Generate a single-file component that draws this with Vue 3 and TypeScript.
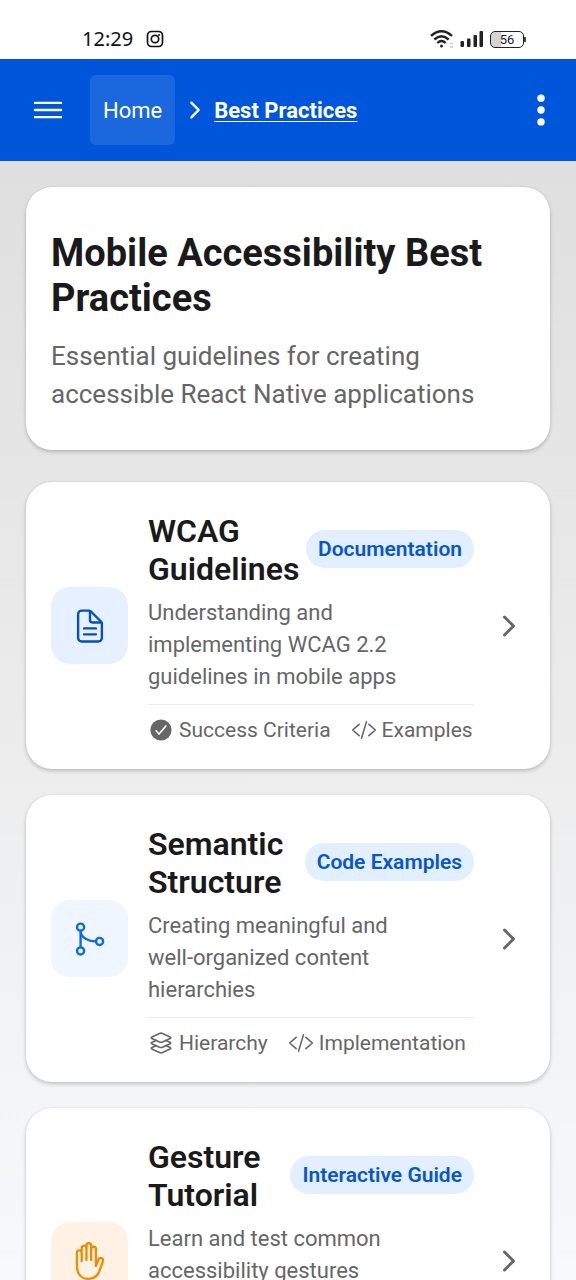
<script setup lang="ts">
interface Meta {
  icon: 'check' | 'layers' | 'code'
  label: string
}

interface Guide {
  title: string
  badge: string
  description: string
  tone: 'doc' | 'merge' | 'hand'
  meta: Meta[]
}

// The word joiner (U+2060) keeps a hyphenated word on one line.
const guides: Guide[] = [
  {
    title: 'WCAG Guidelines',
    badge: 'Documentation',
    description: 'Understanding and implementing WCAG 2.2 guidelines in mobile apps',
    tone: 'doc',
    meta: [
      { icon: 'check', label: 'Success Criteria' },
      { icon: 'code', label: 'Examples' },
    ],
  },
  {
    title: 'Semantic Structure',
    badge: 'Code Examples',
    description: 'Creating meaningful and well-\u2060organized content hierarchies',
    tone: 'merge',
    meta: [
      { icon: 'layers', label: 'Hierarchy' },
      { icon: 'code', label: 'Implementation' },
    ],
  },
  {
    title: 'Gesture Tutorial',
    badge: 'Interactive Guide',
    description: 'Learn and test common accessibility gestures',
    tone: 'hand',
    meta: [],
  },
]

const tilePaths: Record<Guide['tone'], string[]> = {
  doc: [
    'M416 221.25V416a48 48 0 0 1-48 48H144a48 48 0 0 1-48-48V96a48 48 0 0 1 48-48h98.75a32 32 0 0 1 22.62 9.37l141.26 141.26a32 32 0 0 1 9.37 22.62Z',
    'M256 56v120a32 32 0 0 0 32 32h120M176 288h160M176 368h160',
  ],
  merge: [
    'M177 96a48 48 0 1 1-96 0a48 48 0 1 1 96 0ZM177 416a48 48 0 1 1-96 0a48 48 0 1 1 96 0ZM433 288a48 48 0 1 1-96 0a48 48 0 1 1 96 0Z',
    'M129 144v224M129 144c0 96 112 144 208 144',
  ],
  hand: [
    'M80 320V144a32 32 0 0 1 32-32a32 32 0 0 1 32 32v112M144 256V80a32 32 0 0 1 32-32a32 32 0 0 1 32 32v160M272 241V96a32 32 0 0 1 32-32a32 32 0 0 1 32 32v224M208 240V48a32 32 0 0 1 32-32a32 32 0 0 1 32 32v192',
    'M80 320c0 117.4 64 176 152 176s123.71-39.6 144-88l52.71-144c6.66-18.05 3.64-34.79-11.87-43.6c-15.52-8.82-35.91-4.28-44.31 11.68L336 320',
  ],
}
</script>

<template>
  <div class="screen">
    <div class="status">
      <div class="status-side">
        <span class="time">12:29</span>
        <svg class="insta" viewBox="0 0 18 18" fill="none" stroke="#111" stroke-width="1.7">
          <rect x="1.5" y="1.5" width="15" height="15" rx="4" />
          <circle cx="9" cy="9" r="3.7" />
          <circle cx="13" cy="5" r="1" fill="#111" stroke="none" />
        </svg>
      </div>
      <div class="status-side levels">
        <svg class="wifi" viewBox="0 0 24 20" fill="none" stroke="#222" stroke-width="2.4">
          <path d="M1 6.8Q11.5-2.5 22 6.8" />
          <path d="M4.3 10.5Q11.5 4 18.7 10.5" />
          <path d="M7.3 14Q11.5 10 15.7 14" />
          <circle cx="11.5" cy="17" r="1.5" fill="#222" stroke="none" />
          <path d="M20 14.5h3M20 18h3" stroke="#ccc" stroke-width="1.6" />
        </svg>
        <svg class="bars" viewBox="0 0 24 18" fill="#222">
          <rect x="0.5" y="11" width="3.5" height="6" rx="1" />
          <rect x="7" y="8.5" width="3.5" height="8.5" rx="1" />
          <rect x="13.5" y="5" width="3.5" height="12" rx="1" />
          <rect x="19.5" y="1" width="3.5" height="16" rx="1" />
        </svg>
        <div class="battery"><span>56</span></div>
      </div>
    </div>

    <header class="bar">
      <button class="icon-button" type="button" aria-label="Open menu">
        <svg class="icon-lg" viewBox="0 0 512 512"><path class="line" d="M80 160h352M80 256h352M80 352h352" /></svg>
      </button>
      <nav class="crumbs" aria-label="Breadcrumb">
        <a class="home" href="#home">Home</a>
        <svg class="crumb-sep" viewBox="0 0 512 512"><path class="line thick" d="M184 112l144 144-144 144" /></svg>
        <a class="current" href="#best-practices" aria-current="page">Best Practices</a>
      </nav>
      <button class="icon-button" type="button" aria-label="More options">
        <svg class="icon-lg" viewBox="0 0 512 512" fill="currentColor">
          <circle cx="256" cy="96" r="50" /><circle cx="256" cy="256" r="50" /><circle cx="256" cy="416" r="50" />
        </svg>
      </button>
    </header>

    <main class="content">
      <section class="card intro">
        <h1>Mobile Accessibility Best Practices</h1>
        <p>Essential guidelines for creating accessible React Native applications</p>
      </section>

      <a v-for="guide in guides" :key="guide.title" class="card guide" href="#guide">
        <span class="tile" :class="guide.tone">
          <svg class="icon-lg" viewBox="0 0 512 512">
            <path v-for="d in tilePaths[guide.tone]" :key="d" class="line" :d="d" />
          </svg>
        </span>
        <div class="body">
          <div class="heading">
            <h2>{{ guide.title }}</h2>
            <span class="badge">{{ guide.badge }}</span>
          </div>
          <p class="description">{{ guide.description }}</p>
          <div class="meta">
            <span v-for="item in guide.meta" :key="item.label" class="meta-item">
              <svg class="icon-sm" viewBox="0 0 512 512">
                <template v-if="item.icon === 'check'">
                  <circle cx="256" cy="256" r="208" fill="currentColor" />
                  <path class="line tick" d="M352 176L217.6 336 160 272" />
                </template>
                <path v-else-if="item.icon === 'code'" class="line" d="M160 368L32 256l128-112M352 368l128-112-128-112M304 96l-96 320" />
                <template v-else>
                  <path class="line" d="M434.8 137.65l-149.36-68.1c-16.19-7.4-42.69-7.4-58.88 0L77.3 137.65c-17.6 8-17.6 21.09 0 29.09l148 67.5c16.89 7.7 44.69 7.7 61.58 0l148-67.5c17.52-8 17.52-21.1-.08-29.09z" />
                  <path class="line" d="M160 308.52l-82.7 37.11c-17.6 8-17.6 21.1 0 29.1l148 67.5c16.89 7.69 44.69 7.69 61.58 0l148-67.5c17.6-8 17.6-21.1 0-29.1l-79.94-38.47" />
                  <path class="line" d="M160 204.48l-82.8 37.16c-17.6 8-17.6 21.1 0 29.1l148 67.49c16.89 7.7 44.69 7.7 61.58 0l148-67.49c17.7-8 17.7-21.1.1-29.1L352 204.48" />
                </template>
              </svg>
              {{ item.label }}
            </span>
          </div>
        </div>
        <svg class="go" viewBox="0 0 512 512"><path class="line thick" d="M184 112l144 144-144 144" /></svg>
      </a>
    </main>
  </div>
</template>

<style>
body {
  margin: 0;
}
</style>

<style scoped>
.screen {
  display: flex;
  flex-direction: column;
  height: 100vh;
  overflow: hidden;
  background: #fff;
  font-family: Roboto, "Liberation Sans", sans-serif;
  color: #666;
}

svg {
  display: block;
  flex: none;
}

h1,
h2,
p {
  margin: 0;
}

a {
  color: inherit;
  text-decoration: none;
}

.line {
  fill: none;
  stroke: currentColor;
  stroke-width: 32;
  stroke-linecap: round;
  stroke-linejoin: round;
}

.thick {
  stroke-width: 48;
}

.tick {
  stroke: #fff;
}

.icon-lg {
  width: 38px;
  height: 38px;
}

.icon-sm {
  width: 26px;
  height: 26px;
}

.status {
  display: flex;
  justify-content: space-between;
  align-items: flex-end;
  flex: none;
  box-sizing: border-box;
  height: 59px;
  padding: 0 50px 8px 82px;
}

.status-side {
  display: flex;
  align-items: center;
  gap: 13px;
  height: 24px;
}

.levels {
  gap: 6px;
}

.time {
  font-family: "Noto Sans", sans-serif;
  font-size: 20px;
  line-height: 24px;
  color: #111;
}

.insta {
  width: 18px;
  height: 18px;
}

.wifi {
  width: 24px;
  height: 20px;
}

.bars {
  width: 24px;
  height: 18px;
}

.battery {
  position: relative;
  box-sizing: border-box;
  width: 34px;
  height: 17px;
  margin-right: 2px;
  border: 1px solid #222;
  border-radius: 5px;
  background: linear-gradient(to right, #d4d4d4 30%, #fff 30%);
  font-size: 13px;
  line-height: 15px;
  text-align: center;
  color: #222;
}

.battery::after {
  content: "";
  position: absolute;
  top: 5px;
  right: -3px;
  width: 2px;
  height: 5px;
  background: #444;
}

.bar {
  display: flex;
  align-items: center;
  flex: none;
  height: 102px;
  padding: 0 16px 0 29px;
  background: #0056db;
  color: #fff;
}

.icon-button {
  flex: none;
  padding: 0;
  border: 0;
  background: none;
  color: inherit;
}

.crumbs {
  display: flex;
  align-items: center;
  flex: 1;
  margin-left: 23px;
  font-size: 22px;
  line-height: 30px;
}

.home {
  padding: 21px 13px 19px;
  border-radius: 6px;
  background: rgba(255, 255, 255, 0.1);
}

.crumb-sep {
  width: 26px;
  height: 26px;
  margin: 0 6px 0 7px;
}

.current {
  padding-top: 2px;
  font-weight: 700;
  text-decoration: underline;
  text-decoration-thickness: 1px;
  text-underline-offset: 3px;
}

.content {
  flex: 1;
  min-height: 0;
  box-sizing: border-box;
  padding: 26px;
  overflow: hidden;
  background: linear-gradient(to bottom, #dfdfdf, #e9e9e9 40%, #f3f4f6 80%, #f8f9fc);
}

.card {
  border-radius: 26px;
  background: #fff;
  box-shadow: 0 2px 4px rgba(0, 0, 0, 0.2), 0 0 2px rgba(0, 0, 0, 0.08);
}

.intro {
  margin-bottom: 32px;
  padding: 44px 25px 37px;
}

.intro h1 {
  margin-bottom: 16px;
  font-size: 38px;
  line-height: 45px;
  font-weight: 700;
  color: #1a1a1a;
}

.intro p {
  font-size: 26px;
  line-height: 38px;
}

.guide {
  display: flex;
  align-items: center;
  margin-bottom: 26px;
  padding: 26px 25px;
}

.tile {
  display: flex;
  align-items: center;
  justify-content: center;
  flex: none;
  width: 77px;
  height: 77px;
  margin-right: 20px;
  border-radius: 19px;
}

.doc {
  background: #e6f0ff;
  color: #0550b8;
}

.merge {
  background: #eff6ff;
  color: #0f6bd8;
}

.hand {
  background: #fff2e5;
  color: #ea8e0a;
}

.body {
  flex: 1;
  min-width: 0;
}

.heading {
  display: flex;
  align-items: center;
  justify-content: space-between;
  gap: 6px;
  padding: 4px 0;
  margin-bottom: 5px;
}

.heading h2 {
  flex: 1;
  font-size: 32px;
  line-height: 38px;
  font-weight: 600;
  color: #1a1a1a;
}

.badge {
  flex: none;
  margin-bottom: 2px;
  padding: 5px 12px;
  border-radius: 19px;
  background: #e1effe;
  font-size: 21px;
  line-height: 28px;
  font-weight: 600;
  color: #0a56c8;
}

.description {
  padding-right: 16px;
  font-size: 22px;
  line-height: 32px;
}

.meta {
  display: flex;
  gap: 20px;
  min-height: 26px;
  margin-top: 11px;
  padding-top: 12px;
  border-top: 1px solid #e6ecf2;
  font-size: 21px;
  line-height: 26px;
  white-space: nowrap;
}

.guide:last-child .meta {
  min-height: 76px;
}

.meta-item {
  display: flex;
  align-items: center;
  gap: 5px;
}

.go {
  width: 32px;
  height: 32px;
  margin-left: 19px;
}
</style>
